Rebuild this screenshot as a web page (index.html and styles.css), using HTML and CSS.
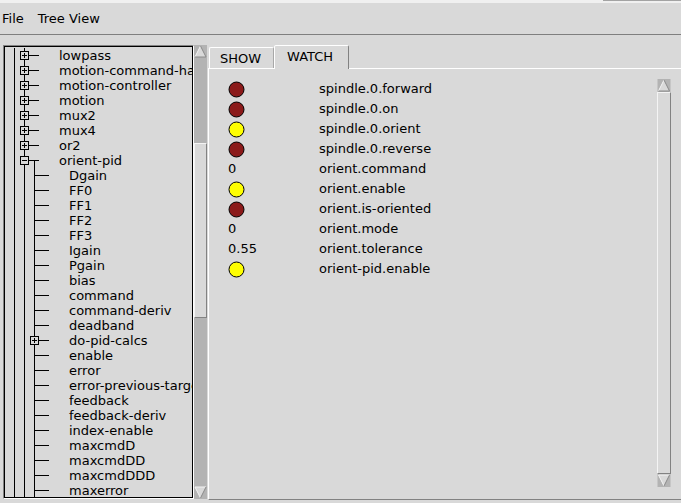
FILE: index.html
```html
<!DOCTYPE html>
<html>
<head>
<meta charset="utf-8">
<title>HAL Show</title>
<link rel="stylesheet" href="styles.css">
</head>
<body>
<svg class="defs" width="0" height="0" aria-hidden="true">
  <defs>
    <symbol id="tp" viewBox="0 0 54 15">
      <g stroke="#000" stroke-width="1" fill="none" shape-rendering="crispEdges">
        <line x1="9.5" y1="0" x2="9.5" y2="15"/>
        <line x1="19.5" y1="0" x2="19.5" y2="15"/>
        <rect x="15.5" y="3.5" width="8" height="8" fill="#d9d9d9"/>
        <line x1="17" y1="7.5" x2="22" y2="7.5"/>
        <line x1="19.5" y1="5" x2="19.5" y2="10"/>
        <line x1="23.5" y1="7.5" x2="34" y2="7.5"/>
      </g>
    </symbol>
    <symbol id="tm" viewBox="0 0 54 15">
      <g stroke="#000" stroke-width="1" fill="none" shape-rendering="crispEdges">
        <line x1="9.5" y1="0" x2="9.5" y2="15"/>
        <line x1="19.5" y1="0" x2="19.5" y2="15"/>
        <rect x="15.5" y="3.5" width="8" height="8" fill="#d9d9d9"/>
        <line x1="17" y1="7.5" x2="22" y2="7.5"/>
        <line x1="23.5" y1="7.5" x2="34" y2="7.5"/>
        <line x1="29.5" y1="7.5" x2="29.5" y2="15"/>
      </g>
    </symbol>
    <symbol id="lc" viewBox="0 0 64 15">
      <g stroke="#000" stroke-width="1" fill="none" shape-rendering="crispEdges">
        <line x1="9.5" y1="0" x2="9.5" y2="15"/>
        <line x1="19.5" y1="0" x2="19.5" y2="15"/>
        <line x1="29.5" y1="0" x2="29.5" y2="15"/>
        <line x1="29.5" y1="7.5" x2="44" y2="7.5"/>
      </g>
    </symbol>
    <symbol id="cp" viewBox="0 0 64 15">
      <g stroke="#000" stroke-width="1" fill="none" shape-rendering="crispEdges">
        <line x1="9.5" y1="0" x2="9.5" y2="15"/>
        <line x1="19.5" y1="0" x2="19.5" y2="15"/>
        <line x1="29.5" y1="0" x2="29.5" y2="15"/>
        <rect x="25.5" y="3.5" width="8" height="8" fill="#d9d9d9"/>
        <line x1="27" y1="7.5" x2="32" y2="7.5"/>
        <line x1="29.5" y1="5" x2="29.5" y2="10"/>
        <line x1="33.5" y1="7.5" x2="44" y2="7.5"/>
      </g>
    </symbol>
    <symbol id="aup" viewBox="0 0 13 13">
      <rect x="0" y="0" width="13" height="13" fill="#b3b3b3"/>
      <polygon points="6.5,1 12,12 1,12" fill="#d9d9d9"/>
      <polyline points="1,12 6.5,1" stroke="#f4f4f4" fill="none"/>
      <polyline points="6.5,1 12,12 1,12" stroke="#8a8a8a" fill="none"/>
    </symbol>
    <symbol id="adn" viewBox="0 0 13 13">
      <rect x="0" y="0" width="13" height="13" fill="#b3b3b3"/>
      <polygon points="1,1 12,1 6.5,12" fill="#d9d9d9"/>
      <polyline points="6.5,12 1,1 12,1" stroke="#f4f4f4" fill="none"/>
      <polyline points="12,1 6.5,12" stroke="#8a8a8a" fill="none"/>
    </symbol>
    <symbol id="ledoff" viewBox="0 0 17 17">
      <circle cx="8.5" cy="8.5" r="7.5" fill="#8b1a1a" stroke="#000" stroke-width="1"/>
    </symbol>
    <symbol id="ledon" viewBox="0 0 17 17">
      <circle cx="8.5" cy="8.5" r="7.5" fill="#ffff00" stroke="#000" stroke-width="1"/>
    </symbol>
  </defs>
</svg>

<div class="topstrip"><div class="topbar"></div></div>
<div class="menubar">
  <span class="menu">File</span>
  <span class="menu">Tree View</span>
</div>

<div class="main">
  <div class="tree">
    <div class="tree-inner">
      <div class="row"><svg class="g"><use href="#tp"/></svg><span>lowpass</span></div>
      <div class="row"><svg class="g"><use href="#tp"/></svg><span>motion-command-handler</span></div>
      <div class="row"><svg class="g"><use href="#tp"/></svg><span>motion-controller</span></div>
      <div class="row"><svg class="g"><use href="#tp"/></svg><span>motion</span></div>
      <div class="row"><svg class="g"><use href="#tp"/></svg><span>mux2</span></div>
      <div class="row"><svg class="g"><use href="#tp"/></svg><span>mux4</span></div>
      <div class="row"><svg class="g"><use href="#tp"/></svg><span>or2</span></div>
      <div class="row"><svg class="g"><use href="#tm"/></svg><span>orient-pid</span></div>
      <div class="row"><svg class="gc"><use href="#lc"/></svg><span>Dgain</span></div>
      <div class="row"><svg class="gc"><use href="#lc"/></svg><span>FF0</span></div>
      <div class="row"><svg class="gc"><use href="#lc"/></svg><span>FF1</span></div>
      <div class="row"><svg class="gc"><use href="#lc"/></svg><span>FF2</span></div>
      <div class="row"><svg class="gc"><use href="#lc"/></svg><span>FF3</span></div>
      <div class="row"><svg class="gc"><use href="#lc"/></svg><span>Igain</span></div>
      <div class="row"><svg class="gc"><use href="#lc"/></svg><span>Pgain</span></div>
      <div class="row"><svg class="gc"><use href="#lc"/></svg><span>bias</span></div>
      <div class="row"><svg class="gc"><use href="#lc"/></svg><span>command</span></div>
      <div class="row"><svg class="gc"><use href="#lc"/></svg><span>command-deriv</span></div>
      <div class="row"><svg class="gc"><use href="#lc"/></svg><span>deadband</span></div>
      <div class="row"><svg class="gc"><use href="#cp"/></svg><span>do-pid-calcs</span></div>
      <div class="row"><svg class="gc"><use href="#lc"/></svg><span>enable</span></div>
      <div class="row"><svg class="gc"><use href="#lc"/></svg><span>error</span></div>
      <div class="row"><svg class="gc"><use href="#lc"/></svg><span>error-previous-target</span></div>
      <div class="row"><svg class="gc"><use href="#lc"/></svg><span>feedback</span></div>
      <div class="row"><svg class="gc"><use href="#lc"/></svg><span>feedback-deriv</span></div>
      <div class="row"><svg class="gc"><use href="#lc"/></svg><span>index-enable</span></div>
      <div class="row"><svg class="gc"><use href="#lc"/></svg><span>maxcmdD</span></div>
      <div class="row"><svg class="gc"><use href="#lc"/></svg><span>maxcmdDD</span></div>
      <div class="row"><svg class="gc"><use href="#lc"/></svg><span>maxcmdDDD</span></div>
      <div class="row"><svg class="gc"><use href="#lc"/></svg><span>maxerror</span></div>
    </div>
  </div>

  <div class="sb tree-sb">
    <svg class="arrow"><use href="#aup"/></svg>
    <div class="trough"><div class="thumb tree-thumb"></div></div>
    <svg class="arrow"><use href="#adn"/></svg>
  </div>

  <div class="notebook">
    <div class="tabs">
      <div class="tab show">SHOW</div>
      <div class="tab sel">WATCH</div>
    </div>
    <div class="frame">
      <div class="watch">
        <div class="wrow"><span class="val"><svg class="led"><use href="#ledoff"/></svg></span><span class="name">spindle.0.forward</span></div>
        <div class="wrow"><span class="val"><svg class="led"><use href="#ledoff"/></svg></span><span class="name">spindle.0.on</span></div>
        <div class="wrow"><span class="val"><svg class="led"><use href="#ledon"/></svg></span><span class="name">spindle.0.orient</span></div>
        <div class="wrow"><span class="val"><svg class="led"><use href="#ledoff"/></svg></span><span class="name">spindle.0.reverse</span></div>
        <div class="wrow"><span class="val num">0</span><span class="name">orient.command</span></div>
        <div class="wrow"><span class="val"><svg class="led"><use href="#ledon"/></svg></span><span class="name">orient.enable</span></div>
        <div class="wrow"><span class="val"><svg class="led"><use href="#ledoff"/></svg></span><span class="name">orient.is-oriented</span></div>
        <div class="wrow"><span class="val num">0</span><span class="name">orient.mode</span></div>
        <div class="wrow"><span class="val num">0.55</span><span class="name">orient.tolerance</span></div>
        <div class="wrow"><span class="val"><svg class="led"><use href="#ledon"/></svg></span><span class="name">orient-pid.enable</span></div>
      </div>
      <div class="sb watch-sb">
        <svg class="arrow wide"><use href="#aup"/></svg>
        <div class="thumb watch-thumb"></div>
        <svg class="arrow wide"><use href="#adn"/></svg>
      </div>
    </div>
  </div>
</div>
</body>
</html>
```

FILE: styles.css
```css
* { box-sizing: border-box; }
html, body { margin: 0; padding: 0; }
body {
  background: #d9d9d9;
  font-family: "DejaVu Sans", "Noto Sans", sans-serif;
  font-size: 13px;
  color: #000;
  width: 681px;
  height: 503px;
  overflow: hidden;
}
.defs { position: absolute; width: 0; height: 0; }

.topstrip {
  height: 3px;
  background: #f0f0f0;
  display: flex;
  justify-content: flex-end;
}
.topbar { width: 78px; height: 1px; background: #a3a3a3; }

.menubar {
  height: 32px;
  border-bottom: 1px solid #7f7f7f;
  display: flex;
  align-items: center;
  padding-left: 2px;
  gap: 14px;
  line-height: 15px;
}

.main {
  display: flex;
  align-items: flex-start;
  padding-top: 10px;
}

/* tree */
.tree {
  margin-left: 3px;
  width: 191px;
  height: 454px;
  border: 1px solid;
  border-color: #828282 #ffffff #ffffff #828282;
  flex: none;
}
.tree-inner {
  border: 1px solid #000;
  height: 100%;
  overflow: hidden;
  padding-top: 1px;
}
.row {
  display: flex;
  height: 15px;
  line-height: 15px;
  white-space: nowrap;
}
.row svg { flex: none; height: 15px; }
.row .g { width: 54px; }
.row .gc { width: 64px; }

/* scrollbars */
.sb { display: flex; flex-direction: column; flex: none; }
.arrow { width: 13px; height: 13px; flex: none; display: block; }
.arrow.wide { width: 14px; }
.tree-sb { width: 13px; height: 454px; background: #b3b3b3; }
.trough { flex: 1; display: flex; flex-direction: column; }
.thumb {
  background: #d9d9d9;
  border: 1px solid;
  border-color: #f4f4f4 #828282 #828282 #f4f4f4;
}
.tree-thumb { margin-top: 85px; height: 175px; }

.notebook { margin-left: 1px; width: 473px; flex: none; }
.tabs {
  display: flex;
  align-items: flex-end;
  height: 23px;
  padding-left: 1px;
}
.tab {
  height: 21px;
  border: 1px solid;
  border-bottom: none;
  border-color: #ffffff #a8a8a8 transparent #ffffff;
  border-radius: 2px 2px 0 0;
  padding-top: 3px;
  line-height: 15px;
  white-space: nowrap;
}
.tab.show { width: 65px; padding-left: 10px; }
.tab.sel {
  width: 75px;
  height: 24px;
  margin-bottom: -1px;
  padding-left: 12px;
  background: #d9d9d9;
  border-right-color: #828282;
  position: relative;
  z-index: 1;
}
.frame {
  height: 432px;
  width: 480px;
  border-top: 1px solid #ffffff;
  border-left: 1px solid #ffffff;
  border-bottom: 1px solid #828282;
  display: flex;
  align-items: flex-start;
  padding-top: 10px;
}
.watch { width: 448px; padding-left: 19px; flex: none; }
.wrow {
  height: 20px;
  display: flex;
  align-items: center;
  line-height: 15px;
  white-space: nowrap;
}
.val { width: 91px; display: flex; align-items: center; flex: none; }
.name, .num { margin-top: -2px; }
.led { width: 17px; height: 17px; display: block; }
.watch-sb { width: 14px; height: 408px; }
.watch-thumb { height: 382px; }
```
